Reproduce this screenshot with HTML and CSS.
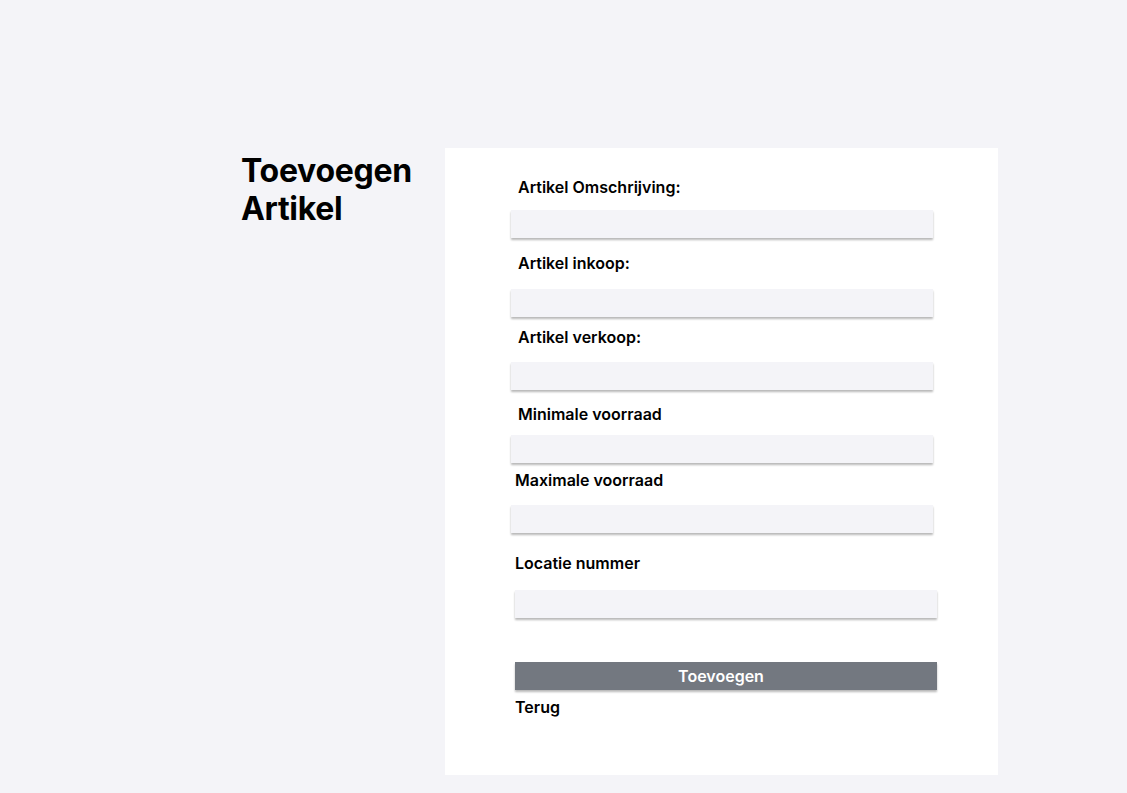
FILE: index.html
```html
<!DOCTYPE html>
<html lang="nl">
<head>
<meta charset="utf-8">
<title>Toevoegen Artikel</title>
<link rel="stylesheet" href="styles.css">
</head>
<body>
<main class="page">
  <h1 class="title">Toevoegen<br>Artikel</h1>
  <section class="card">
    <form class="form">
      <label class="label l1">Artikel Omschrijving:</label>
      <input class="input i1" type="text">
      <label class="label l2">Artikel inkoop:</label>
      <input class="input i2" type="text">
      <label class="label l3">Artikel verkoop:</label>
      <input class="input i3" type="text">
      <label class="label l4">Minimale voorraad</label>
      <input class="input i4" type="text">
      <label class="label l5 shift">Maximale voorraad</label>
      <input class="input i5" type="text">
      <label class="label l6 shift">Locatie nummer</label>
      <input class="input i6" type="text">
      <button class="button" type="button">Toevoegen</button>
      <a class="back" href="#">Terug</a>
    </form>
  </section>
</main>
</body>
</html>
```

FILE: styles.css
```css
* { box-sizing: border-box; }
html, body { margin: 0; padding: 0; }
body {
  background: #f4f4f8;
  font-family: Inter, "Noto Sans", "Liberation Sans", sans-serif;
  color: #000;
  width: 1127px;
  height: 793px;
  overflow: hidden;
}
.page {
  display: flex;
  padding-top: 148px;
  padding-left: 241px;
}
.title {
  margin: 4px 0 0 0;
  width: 204px;
  font-size: 32px;
  line-height: 38px;
  font-weight: 700;
  letter-spacing: -0.3px;
}
.card {
  background: #ffffff;
  width: 553px;
  height: 627px;
  padding: 30px 0 0 66px;
}
.form {
  display: flex;
  flex-direction: column;
  align-items: flex-start;
}
.label {
  display: block;
  font-size: 16px;
  line-height: 18px;
  font-weight: 600;
  padding-left: 7px;
}
.label.shift { padding-left: 4px; }
.input {
  display: block;
  width: 422px;
  height: 28px;
  border: none;
  outline: none;
  background: #f4f4f8;
  box-shadow: 0 2px 2px rgba(0, 0, 0, 0.28);
  padding: 0;
  font: inherit;
}
.input.i6 { margin-left: 4px; }
.l1 { margin-top: 0; }
.i1 { margin-top: 14px; }
.l2 { margin-top: 16px; }
.i2 { margin-top: 17px; }
.l3 { margin-top: 11px; }
.i3 { margin-top: 16px; }
.l4 { margin-top: 15px; }
.i4 { margin-top: 12px; }
.l5 { margin-top: 8px; }
.i5 { margin-top: 16px; }
.l6 { margin-top: 21px; }
.i6 { margin-top: 18px; }
.button {
  margin-top: 44px;
  margin-left: 4px;
  width: 422px;
  height: 28px;
  border: none;
  background: #737880;
  color: #ffffff;
  font-family: inherit;
  font-size: 16px;
  font-weight: 600;
  box-shadow: 0 2px 2px rgba(0, 0, 0, 0.28);
  padding: 0 10px 0 0;
}
.back {
  margin-top: 8px;
  margin-left: 4px;
  font-size: 16px;
  line-height: 18px;
  font-weight: 600;
  color: #000;
  text-decoration: none;
}
```
